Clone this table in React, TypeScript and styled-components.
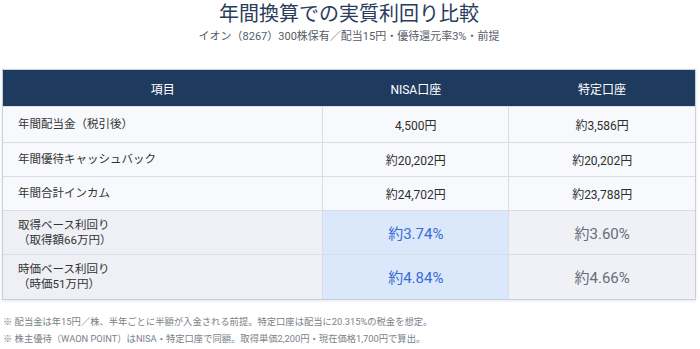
import React from 'react';
import styled, { createGlobalStyle } from 'styled-components';

const GlobalStyle = createGlobalStyle`
  html, body {
    margin: 0;
    padding: 0;
    background: #ffffff;
  }
  body {
    font-family: 'Roboto', 'Noto Sans CJK JP', sans-serif;
    color: #333;
  }
`;

const Page = styled.div`
  width: 700px;
  height: 349px;
  padding: 1px 4px 0 2px;
  box-sizing: border-box;
  overflow: hidden;
`;

const Title = styled.h1`
  margin: 0;
  text-align: center;
  font-size: 20px;
  line-height: 27px;
  font-weight: 400;
  color: #2a3d5c;
`;

const Subtitle = styled.p`
  margin: 1px 0 0 0;
  text-align: center;
  font-size: 11px;
  line-height: 16px;
  color: #555b66;
`;

const TableWrap = styled.div`
  margin-top: 24px;
  border: 1.5px solid #c9ced8;
  box-shadow: 0 1px 3px rgba(30, 50, 80, 0.12);
`;

const Table = styled.table`
  width: 100%;
  border-collapse: collapse;
  table-layout: fixed;
`;

const HeadCell = styled.th`
  height: 36px;
  padding: 0;
  background: #1f3a5f;
  color: #ffffff;
  font-size: 12px;
  font-weight: 400;
  text-align: center;
`;

const Row = styled.tr<{ $h: number }>`
  height: ${p => p.$h}px;
`;

const LabelCell = styled.td<{ $yield?: boolean }>`
  padding: 0 0 0 15px;
  background: ${p => (p.$yield ? '#eef0f6' : '#f8f9fc')};
  border-top: 1px solid #d9dde5;
  border-right: 1px solid #d9dde5;
  font-size: 11.5px;
  line-height: 15px;
  color: #333;
`;

const ValueCell = styled.td<{ $tone?: 'nisa' | 'tokutei' }>`
  padding: 0;
  text-align: center;
  border-top: 1px solid #d9dde5;
  border-right: 1px solid #d9dde5;
  font-size: ${p => (p.$tone ? '15px' : '12px')};
  color: ${p => (p.$tone === 'nisa' ? '#3a6bd4' : p.$tone === 'tokutei' ? '#676d79' : '#2e2e2e')};
  background: ${p => (p.$tone === 'nisa' ? '#dbe7fb' : p.$tone === 'tokutei' ? '#eff1f7' : '#f8f9fc')};
  &:last-child {
    border-right: none;
  }
`;

const Notes = styled.div`
  margin-top: 15px;
  padding-left: 1px;
  display: flex;
  flex-direction: column;
  gap: 3px;
`;

const Note = styled.p`
  margin: 0;
  font-size: 9.3px;
  line-height: 14px;
  color: #7a7f88;
`;

const rows = [
  { label: '年間配当金（税引後）', nisa: '4,500円', tokutei: '約3,586円', h: 36 },
  { label: '年間優待キャッシュバック', nisa: '約20,202円', tokutei: '約20,202円', h: 34 },
  { label: '年間合計インカム', nisa: '約24,702円', tokutei: '約23,788円', h: 34 },
];

const yields = [
  { label: '取得ベース利回り', sub: '（取得額66万円）', nisa: '約3.74%', tokutei: '約3.60%' },
  { label: '時価ベース利回り', sub: '（時価51万円）', nisa: '約4.84%', tokutei: '約4.66%' },
];

export default function App() {
  return (
    <Page>
      <GlobalStyle />
      <Title>年間換算での実質利回り比較</Title>
      <Subtitle>イオン（8267）300株保有／配当15円・優待還元率3%・前提</Subtitle>

      <TableWrap>
        <Table>
          <colgroup>
            <col style={{ width: '46.2%' }} />
            <col style={{ width: '26.9%' }} />
            <col />
          </colgroup>
          <thead>
            <tr>
              <HeadCell>項目</HeadCell>
              <HeadCell>NISA口座</HeadCell>
              <HeadCell>特定口座</HeadCell>
            </tr>
          </thead>
          <tbody>
            {rows.map(r => (
              <Row key={r.label} $h={r.h}>
                <LabelCell>{r.label}</LabelCell>
                <ValueCell>{r.nisa}</ValueCell>
                <ValueCell>{r.tokutei}</ValueCell>
              </Row>
            ))}
            {yields.map(y => (
              <Row key={y.label} $h={44}>
                <LabelCell $yield>
                  {y.label}
                  <br />
                  {y.sub}
                </LabelCell>
                <ValueCell $tone="nisa">{y.nisa}</ValueCell>
                <ValueCell $tone="tokutei">{y.tokutei}</ValueCell>
              </Row>
            ))}
          </tbody>
        </Table>
      </TableWrap>

      <Notes>
        <Note>※ 配当金は年15円／株、半年ごとに半額が入金される前提。特定口座は配当に20.315%の税金を想定。</Note>
        <Note>※ 株主優待（WAON POINT）はNISA・特定口座で同額。取得単価2,200円・現在価格1,700円で算出。</Note>
      </Notes>
    </Page>
  );
}
